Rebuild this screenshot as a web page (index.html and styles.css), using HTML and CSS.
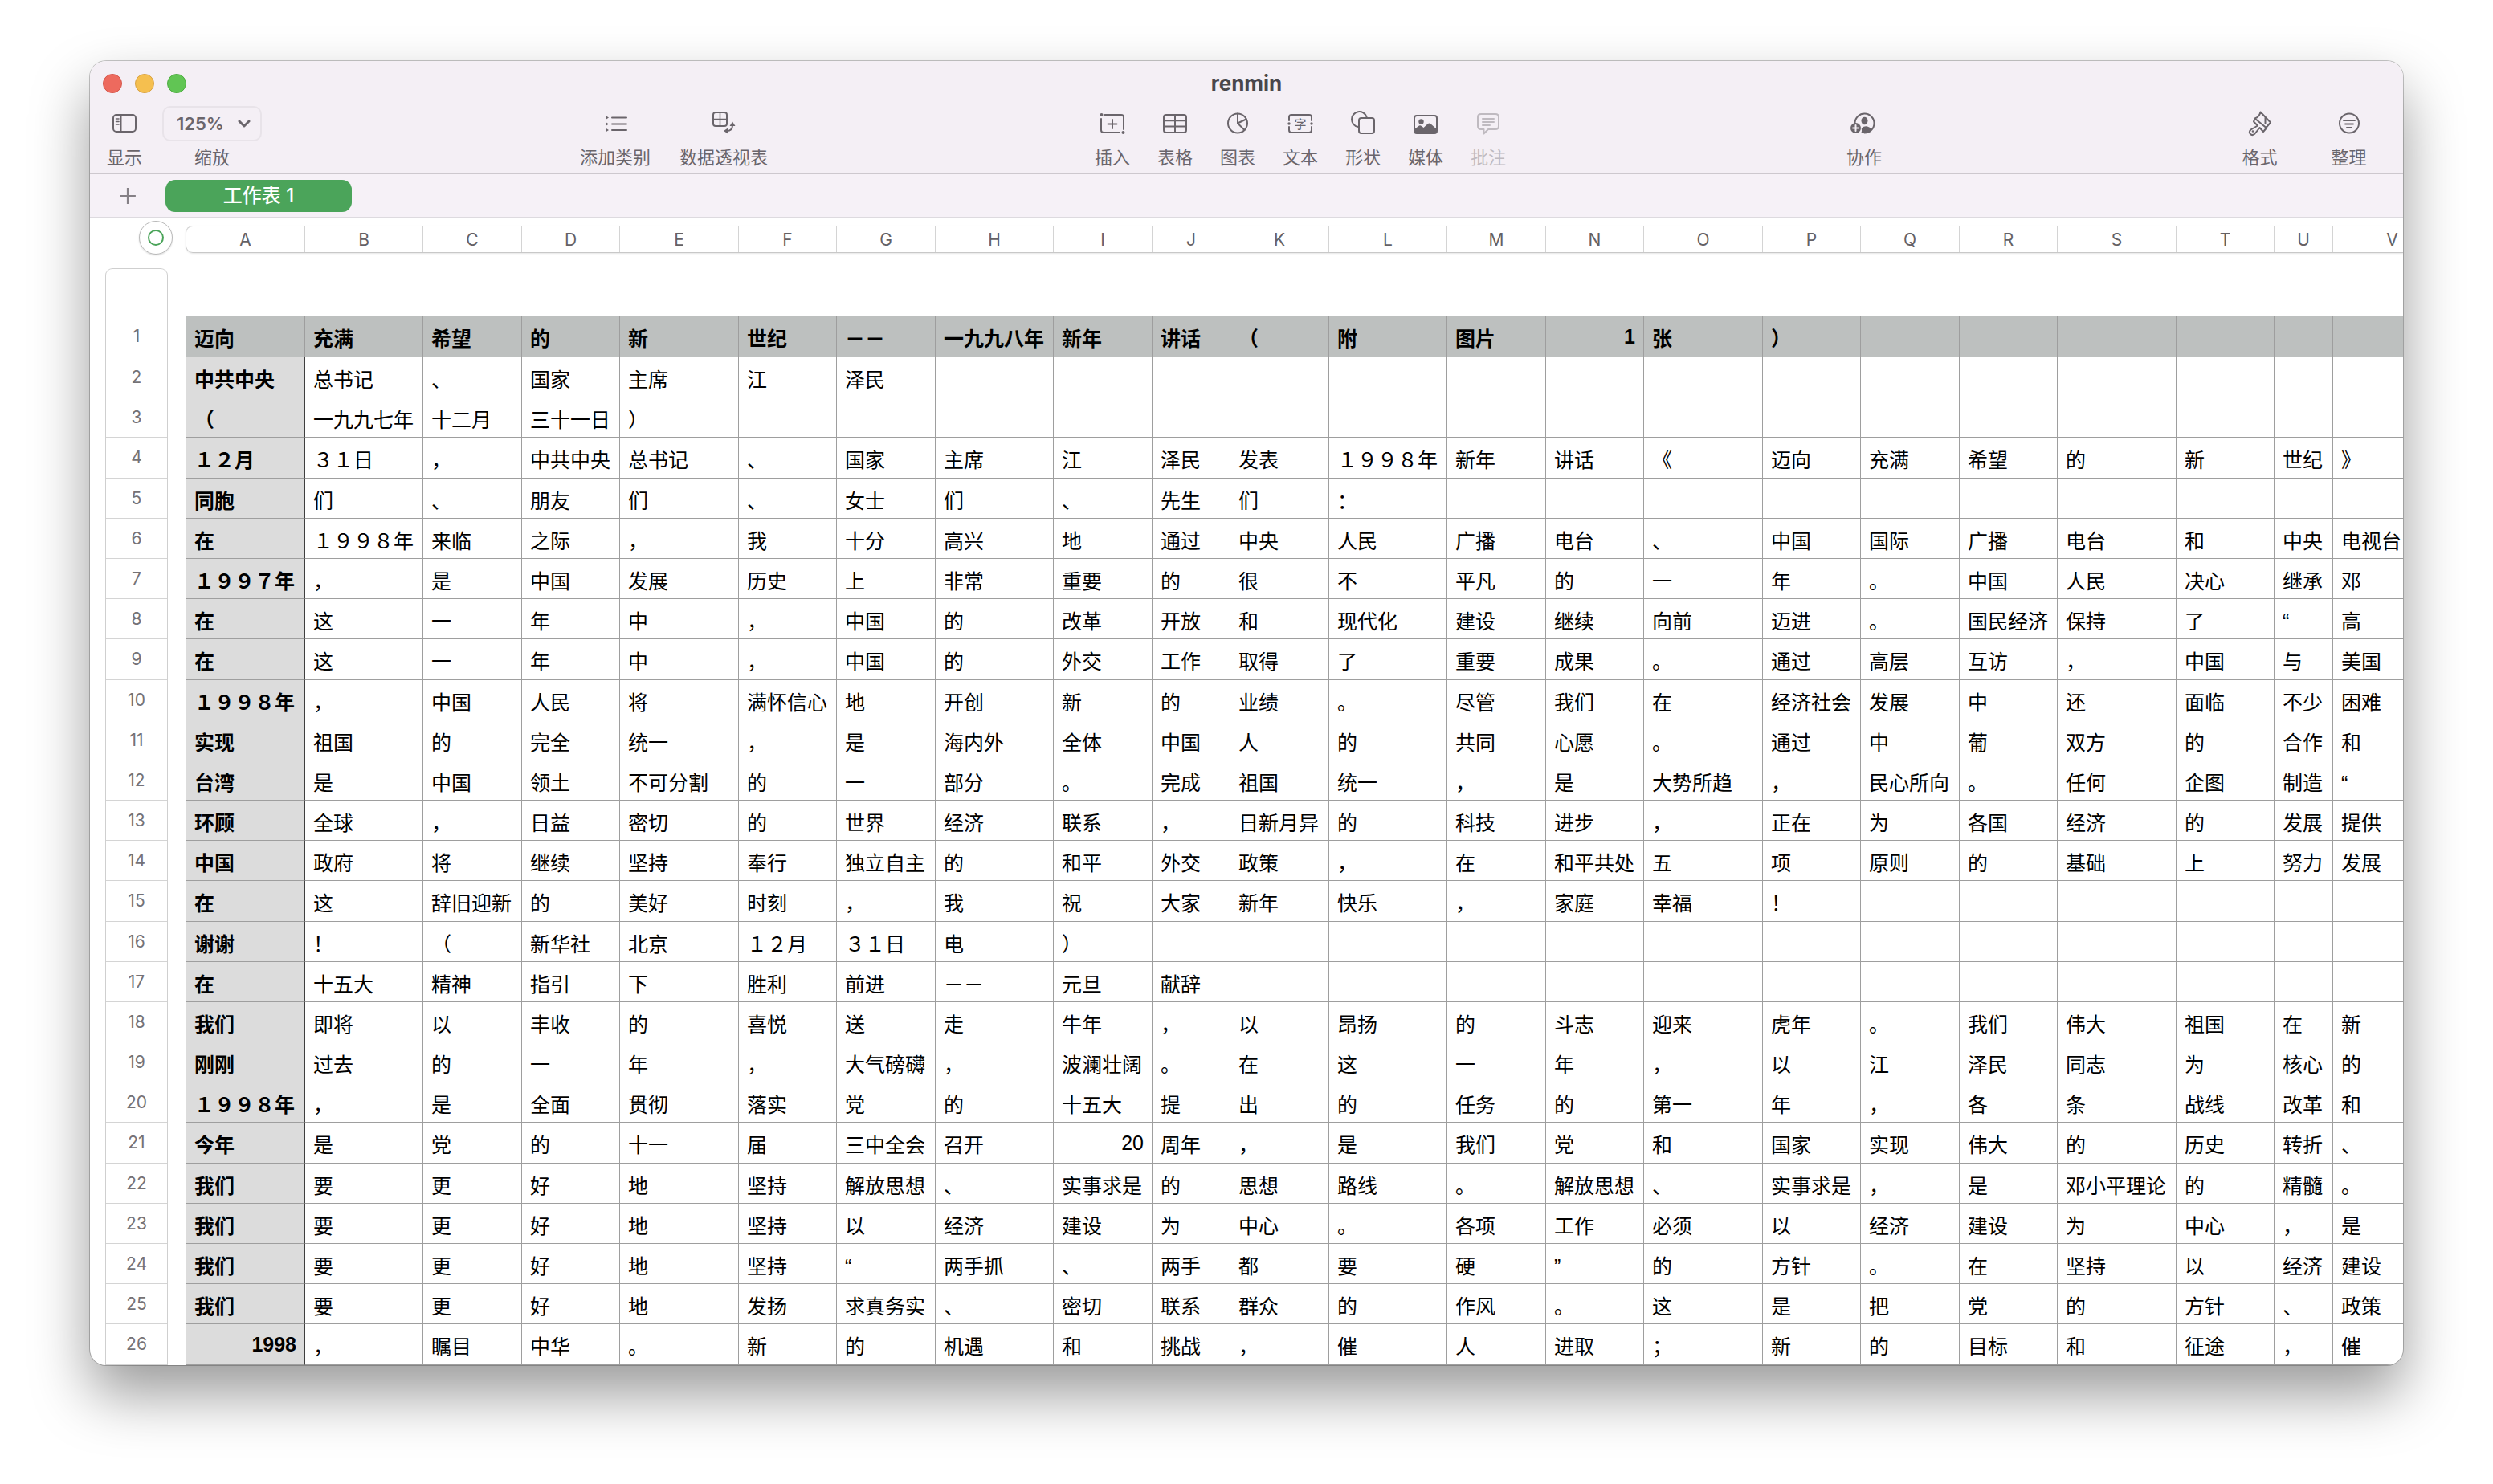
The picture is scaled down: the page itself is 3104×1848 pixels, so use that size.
FILE: index.html
```html
<!DOCTYPE html>
<html lang="zh-CN">
<head>
<meta charset="utf-8">
<title>renmin</title>
<meta name="viewport" content="width=device-width, initial-scale=1">
<link rel="stylesheet" href="styles.css">
</head>
<body>
<main class="window">
  <header class="toolbar">
    <div class="titlebar">
      <div class="lights">
        <button class="light light-close" aria-label="关闭"></button>
        <button class="light light-min" aria-label="最小化"></button>
        <button class="light light-full" aria-label="全屏"></button>
      </div>
      <h1 class="title">renmin</h1>
    </div>
    <div class="tools">
      <div class="group group-view">
        <button class="tool tool-show">
          <svg class="icon" viewBox="0 0 36 36"><rect x="4" y="7" width="28" height="21" rx="4"/><path d="M13.500 7v21"/><path class="thin" d="M7.500 12h3.500M7.500 15.500h3.500M7.500 19h3.500"/></svg>
          <span>显示</span>
        </button>
        <div class="tool tool-zoom">
          <div class="zoom">
            <select class="zoom-select" id="zoom"><option>125%</option></select>
            <svg class="zoom-arrow" viewBox="0 0 16 10"><path d="M2 2l6 6l6-6"/></svg>
          </div>
          <label for="zoom">缩放</label>
        </div>
      </div>
      <div class="group group-data">
        <button class="tool">
          <svg class="icon" viewBox="0 0 36 36"><path d="M14 10.500h18M14 18.500h18M14 26h18"/><path class="fill" d="M6 8l4 2.500l-4 2.500zM6 16l4 2.500l-4 2.500zM6 23.500l4 2.500l-4 2.500z"/></svg>
          <span>添加类别</span>
        </button>
        <button class="tool">
          <svg class="icon" viewBox="0 0 36 36"><rect x="5" y="4" width="17" height="17" rx="3"/><path class="thin" d="M13.500 4v17M5 12.500h17"/><path d="M22 27q7 0 7-7"/><path class="fill" d="M24 23v8l-6-4zM25.500 21h7l-3.500-5.500z"/></svg>
          <span>数据透视表</span>
        </button>
      </div>
      <div class="group group-insert">
        <button class="tool">
          <svg class="icon" viewBox="0 0 36 36"><path d="M8.500 7H29q3 0 3 3v15M4 12v14q0 3 3 3h20M18 13v11M12.500 18.500h11"/><circle class="fill" cx="4.500" cy="7" r="2"/><circle class="fill" cx="31.500" cy="29" r="2"/></svg>
          <span>插入</span>
        </button>
        <button class="tool">
          <svg class="icon" viewBox="0 0 36 36"><rect x="4" y="7" width="28" height="22" rx="3"/><path d="M18 7v22M4 14.300h28M4 21.600h28"/></svg>
          <span>表格</span>
        </button>
        <button class="tool">
          <svg class="icon" viewBox="0 0 36 36"><circle cx="18" cy="17.500" r="12"/><path d="M18 5.500v12l8.500 8.500M18 17.500l10.500-5"/></svg>
          <span>图表</span>
        </button>
        <button class="tool">
          <svg class="icon" viewBox="0 0 36 36"><path d="M4 14v-4q0-3 3-3h22q3 0 3 3v4M4 22v4q0 3 3 3h22q3 0 3-3v-4"/><circle class="fill" cx="4" cy="18" r="1.700"/><circle class="fill" cx="32" cy="18" r="1.700"/><text class="icon-char" x="18" y="24">字</text></svg>
          <span>文本</span>
        </button>
        <button class="tool">
          <svg class="icon" viewBox="0 0 36 36"><path d="M12 22a9.500 9.500 0 1 1 10.500-12.500"/><rect x="13" y="11" width="19" height="19" rx="3"/></svg>
          <span>形状</span>
        </button>
        <button class="tool">
          <svg class="icon" viewBox="0 0 36 36"><rect x="4" y="8" width="28" height="22" rx="3"/><circle class="fill" cx="12.500" cy="15.500" r="3.200"/><path class="fill" d="M4 25l6-4.500q1-.6 2 0l3.500 2.500l5.500-5q1.500-1 3 0l8 7v3q0 2-2 2H6q-2 0-2-2z"/></svg>
          <span>媒体</span>
        </button>
        <button class="tool" disabled>
          <svg class="icon" viewBox="0 0 36 36"><path d="M9 6h18q4 0 4 4v11q0 4-4 4H18l-5.500 5.500V25H9q-4 0-4-4V10q0-4 4-4z"/><path d="M11 12h14M11 16h14M11 20h9"/></svg>
          <span>批注</span>
        </button>
      </div>
      <div class="group group-share">
        <button class="tool">
          <svg class="icon" viewBox="0 0 36 36"><path d="M6.500 17a12 12 0 1 1 12 12.500"/><ellipse class="fill" cx="18.500" cy="14.500" rx="4" ry="4.800"/><path class="fill" d="M14.500 29q1-2 .2-5.500q4-3 8-1.800q3 .8 4.600 3.200q-3.800 5.600-12.800 4.100z"/><circle class="fill" cx="7.500" cy="23.500" r="6.500"/><path class="knock" d="M7.500 20v7M4 23.500h7"/></svg>
          <span>协作</span>
        </button>
      </div>
      <div class="group group-inspect">
        <button class="tool">
          <svg class="icon" viewBox="0 0 36 36"><path d="M18.500 3.500l12.500 13l-5.500 6.500L11.500 11.500q5.500-1.500 7-8zM11.500 12l-1.500 3.500l5 5l-8.500 5q-3 3-.5 5.500q2.500 2.500 5.500-.5l6-7.500l4.500 5l3.500-4M24.500 10.500v7"/><circle class="fill" cx="9" cy="27.500" r="1.300"/></svg>
          <span>格式</span>
        </button>
        <button class="tool">
          <svg class="icon" viewBox="0 0 36 36"><circle cx="18" cy="17.500" r="12"/><path d="M11 14h14M13 18.500h10M15 23h6"/></svg>
          <span>整理</span>
        </button>
      </div>
    </div>
  </header>
  <nav class="sheets">
    <button class="add-sheet" aria-label="添加工作表"><svg viewBox="0 0 20 20"><path d="M10 1v18M1 10h18"/></svg></button>
    <button class="sheet-tab">工作表 1</button>
  </nav>
  <section class="canvas">
    <div class="corner"><button class="table-handle" aria-label="选择表格"><span></span></button></div>
    <div class="col-heads">
      <span>A</span><span>B</span><span>C</span><span>D</span><span>E</span><span>F</span><span>G</span><span>H</span><span>I</span><span>J</span><span>K</span><span>L</span><span>M</span><span>N</span><span>O</span><span>P</span><span>Q</span><span>R</span><span>S</span><span>T</span><span>U</span><span>V</span>
    </div>
    <div class="row-heads">
      <span class="name-row"></span>
      <span class="tall">1</span><span>2</span><span>3</span><span class="tall">4</span><span>5</span><span>6</span><span>7</span><span>8</span><span class="tall">9</span><span>10</span><span>11</span><span>12</span><span>13</span><span>14</span><span class="tall">15</span><span>16</span><span>17</span><span>18</span><span>19</span><span>20</span><span class="tall">21</span><span>22</span><span>23</span><span>24</span><span>25</span><span class="tall">26</span>
    </div>
    <table class="grid">
      <colgroup><col class="w148"><col class="w147"><col class="w123"><col class="w122"><col class="w148"><col class="w122"><col class="w123"><col class="w147"><col class="w123"><col class="w97"><col class="w123"><col class="w147"><col class="w123"><col class="w122"><col class="w148"><col class="w122"><col class="w123"><col class="w122"><col class="w148"><col class="w122"><col class="w73"><col class="w148"></colgroup>
      <thead>
        <tr class="tall"><th>迈向<th>充满<th>希望<th>的<th>新<th>世纪<th>－－<th>一九九八年<th>新年<th>讲话<th>（<th>附<th>图片<th class="num">1<th>张<th>）<th><th><th><th><th><th>
      </thead>
      <tbody>
        <tr><th>中共中央<td>总书记<td>、<td>国家<td>主席<td>江<td>泽民<td><td><td><td><td><td><td><td><td><td><td><td><td><td><td><td>
        <tr><th>（<td>一九九七年<td>十二月<td>三十一日<td>）<td><td><td><td><td><td><td><td><td><td><td><td><td><td><td><td><td><td>
        <tr class="tall"><th>１２月<td>３１日<td>，<td>中共中央<td>总书记<td>、<td>国家<td>主席<td>江<td>泽民<td>发表<td>１９９８年<td>新年<td>讲话<td>《<td>迈向<td>充满<td>希望<td>的<td>新<td>世纪<td>》
        <tr><th>同胞<td>们<td>、<td>朋友<td>们<td>、<td>女士<td>们<td>、<td>先生<td>们<td>：<td><td><td><td><td><td><td><td><td><td>
        <tr><th>在<td>１９９８年<td>来临<td>之际<td>，<td>我<td>十分<td>高兴<td>地<td>通过<td>中央<td>人民<td>广播<td>电台<td>、<td>中国<td>国际<td>广播<td>电台<td>和<td>中央<td>电视台
        <tr><th>１９９７年<td>，<td>是<td>中国<td>发展<td>历史<td>上<td>非常<td>重要<td>的<td>很<td>不<td>平凡<td>的<td>一<td>年<td>。<td>中国<td>人民<td>决心<td>继承<td>邓
        <tr><th>在<td>这<td>一<td>年<td>中<td>，<td>中国<td>的<td>改革<td>开放<td>和<td>现代化<td>建设<td>继续<td>向前<td>迈进<td>。<td>国民经济<td>保持<td>了<td>“<td>高
        <tr class="tall"><th>在<td>这<td>一<td>年<td>中<td>，<td>中国<td>的<td>外交<td>工作<td>取得<td>了<td>重要<td>成果<td>。<td>通过<td>高层<td>互访<td>，<td>中国<td>与<td>美国
        <tr><th>１９９８年<td>，<td>中国<td>人民<td>将<td>满怀信心<td>地<td>开创<td>新<td>的<td>业绩<td>。<td>尽管<td>我们<td>在<td>经济社会<td>发展<td>中<td>还<td>面临<td>不少<td>困难
        <tr><th>实现<td>祖国<td>的<td>完全<td>统一<td>，<td>是<td>海内外<td>全体<td>中国<td>人<td>的<td>共同<td>心愿<td>。<td>通过<td>中<td>葡<td>双方<td>的<td>合作<td>和
        <tr><th>台湾<td>是<td>中国<td>领土<td>不可分割<td>的<td>一<td>部分<td>。<td>完成<td>祖国<td>统一<td>，<td>是<td>大势所趋<td>，<td>民心所向<td>。<td>任何<td>企图<td>制造<td>“
        <tr><th>环顾<td>全球<td>，<td>日益<td>密切<td>的<td>世界<td>经济<td>联系<td>，<td>日新月异<td>的<td>科技<td>进步<td>，<td>正在<td>为<td>各国<td>经济<td>的<td>发展<td>提供
        <tr><th>中国<td>政府<td>将<td>继续<td>坚持<td>奉行<td>独立自主<td>的<td>和平<td>外交<td>政策<td>，<td>在<td>和平共处<td>五<td>项<td>原则<td>的<td>基础<td>上<td>努力<td>发展
        <tr class="tall"><th>在<td>这<td>辞旧迎新<td>的<td>美好<td>时刻<td>，<td>我<td>祝<td>大家<td>新年<td>快乐<td>，<td>家庭<td>幸福<td>！<td><td><td><td><td><td>
        <tr><th>谢谢<td>！<td>（<td>新华社<td>北京<td>１２月<td>３１日<td>电<td>）<td><td><td><td><td><td><td><td><td><td><td><td><td><td>
        <tr><th>在<td>十五大<td>精神<td>指引<td>下<td>胜利<td>前进<td>－－<td>元旦<td>献辞<td><td><td><td><td><td><td><td><td><td><td><td><td>
        <tr><th>我们<td>即将<td>以<td>丰收<td>的<td>喜悦<td>送<td>走<td>牛年<td>，<td>以<td>昂扬<td>的<td>斗志<td>迎来<td>虎年<td>。<td>我们<td>伟大<td>祖国<td>在<td>新
        <tr><th>刚刚<td>过去<td>的<td>一<td>年<td>，<td>大气磅礴<td>，<td>波澜壮阔<td>。<td>在<td>这<td>一<td>年<td>，<td>以<td>江<td>泽民<td>同志<td>为<td>核心<td>的
        <tr><th>１９９８年<td>，<td>是<td>全面<td>贯彻<td>落实<td>党<td>的<td>十五大<td>提<td>出<td>的<td>任务<td>的<td>第一<td>年<td>，<td>各<td>条<td>战线<td>改革<td>和
        <tr class="tall"><th>今年<td>是<td>党<td>的<td>十一<td>届<td>三中全会<td>召开<td class="num">20<td>周年<td>，<td>是<td>我们<td>党<td>和<td>国家<td>实现<td>伟大<td>的<td>历史<td>转折<td>、
        <tr><th>我们<td>要<td>更<td>好<td>地<td>坚持<td>解放思想<td>、<td>实事求是<td>的<td>思想<td>路线<td>。<td>解放思想<td>、<td>实事求是<td>，<td>是<td>邓小平理论<td>的<td>精髓<td>。
        <tr><th>我们<td>要<td>更<td>好<td>地<td>坚持<td>以<td>经济<td>建设<td>为<td>中心<td>。<td>各项<td>工作<td>必须<td>以<td>经济<td>建设<td>为<td>中心<td>，<td>是
        <tr><th>我们<td>要<td>更<td>好<td>地<td>坚持<td>“<td>两手抓<td>、<td>两手<td>都<td>要<td>硬<td>”<td>的<td>方针<td>。<td>在<td>坚持<td>以<td>经济<td>建设
        <tr><th>我们<td>要<td>更<td>好<td>地<td>发扬<td>求真务实<td>、<td>密切<td>联系<td>群众<td>的<td>作风<td>。<td>这<td>是<td>把<td>党<td>的<td>方针<td>、<td>政策
        <tr class="tall"><th class="num">1998<td>，<td>瞩目<td>中华<td>。<td>新<td>的<td>机遇<td>和<td>挑战<td>，<td>催<td>人<td>进取<td>；<td>新<td>的<td>目标<td>和<td>征途<td>，<td>催
      </tbody>
    </table>
  </section>
</main>
</body>
</html>
```
FILE: styles.css
```css
* { box-sizing: border-box; }

body {
  margin: 0;
  min-height: 100vh;
  padding: 76px 112px 148px;
  background: #fff;
  color: #000;
  font-family: "Inter", "Noto Sans CJK SC", sans-serif;
  overflow-x: hidden;
}

button, select {
  margin: 0;
  padding: 0;
  border: 0;
  background: none;
  color: inherit;
  font: inherit;
}

.window {
  overflow: hidden;
  border-radius: 20px;
  background: #fff;
  box-shadow: 0 0 0 1px rgba(0, 0, 0, .22), 0 36px 72px rgba(0, 0, 0, .4);
}

/* title bar and tools */
.toolbar {
  background: #f4eff5;
  border-bottom: 1px solid #cdc8ce;
  color: #6a656b;
}
.titlebar {
  display: grid;
  grid-template-columns: 1fr auto 1fr;
  align-items: center;
  height: 56px;
  padding: 0 16px;
}
.lights { display: flex; gap: 16px; }
.light { width: 24px; height: 24px; border-radius: 50%; border: 1px solid; }
.light-close { background: #ed6a5e; border-color: #d5564b; }
.light-min { background: #f5bf4f; border-color: #d8a243; }
.light-full { background: #61c554; border-color: #4dab40; }
.title {
  margin: 0;
  font-size: 26px;
  line-height: 32px;
  font-weight: 700;
  color: #4a474b;
}

.tools {
  display: flex;
  justify-content: space-between;
  height: 84px;
  padding: 0 12px;
}
.group { display: flex; }
.group-view { gap: 16px; }
.group-data { gap: 32px; padding-left: 2px; }
.group-insert .tool, .group-share .tool { width: 78px; }
.group-inspect { padding-left: 8px; }
.group-inspect .tool { width: 111px; }
.tool {
  display: flex;
  flex-direction: column;
  align-items: center;
  font-size: 22px;
  line-height: 32px;
  white-space: nowrap;
}
.group-data .tool:first-child { width: 96px; }
.group-data .tool:last-child { width: 110px; }
.tool-show { width: 62px; }
.tool-zoom { width: 124px; }
.tool:disabled { color: #bfbac0; }
.tool span, .tool label { margin-top: 4px; }
.tool .icon { width: 36px; height: 36px; margin: 4px 0; overflow: visible; }
.icon { fill: none; stroke: currentColor; stroke-width: 2; stroke-linecap: round; stroke-linejoin: round; }
.icon .thin { stroke-width: 1.5; }
.icon .fill { fill: currentColor; stroke: none; }
.icon .knock { stroke: #f4eff5; }
.icon-char {
  fill: currentColor;
  stroke: none;
  font-family: "Noto Sans CJK SC", sans-serif;
  font-size: 15px;
  font-weight: 500;
  text-anchor: middle;
}
.zoom { display: grid; align-items: center; width: 124px; height: 44px; }
.zoom-select {
  grid-area: 1 / 1;
  width: 100%;
  height: 44px;
  padding-left: 16px;
  border: 2px solid #e8e3e9;
  border-radius: 10px;
  appearance: none;
  font-size: 22px;
  font-weight: 600;
}
.zoom-arrow {
  grid-area: 1 / 1;
  justify-self: end;
  width: 16px;
  height: 10px;
  margin-right: 14px;
  fill: none;
  stroke: currentColor;
  stroke-width: 3;
  stroke-linecap: round;
  stroke-linejoin: round;
  pointer-events: none;
}

/* sheet tabs */
.sheets {
  display: flex;
  align-items: center;
  height: 55px;
  padding: 0 36px;
  gap: 36px;
  background: #f6f1f7;
  border-bottom: 2px solid #dddadf;
}
.add-sheet { width: 22px; height: 22px; color: #858086; }
.add-sheet svg { display: block; width: 22px; height: 22px; fill: none; stroke: currentColor; stroke-width: 2; }
.sheet-tab {
  width: 232px;
  height: 40px;
  border-radius: 12px;
  background: #4ba45a;
  color: #fff;
  font-size: 24px;
  line-height: 40px;
  font-weight: 500;
}

/* canvas: headings round the table */
.canvas {
  display: grid;
  grid-template-columns: 97px minmax(0, 1fr);
  grid-template-rows: 53px auto;
  column-gap: 22px;
}
.corner { display: flex; justify-content: flex-end; padding: 3px 0 0; margin-right: -6px; }
.table-handle {
  display: grid;
  place-items: center;
  width: 42px;
  height: 42px;
  border: 1px solid #b8b8b8;
  border-radius: 50%;
  box-shadow: 0 1px 2px rgba(0, 0, 0, .15);
}
.table-handle span { width: 20px; height: 20px; border: 2px solid #4ba45a; border-radius: 50%; }
.col-heads, .row-heads { font-size: 21px; color: #646165; }
.col-heads {
  display: grid;
  grid-template-columns: 148px 147px 123px 122px 148px 122px 123px 147px 123px 97px 123px 147px 123px 122px 148px 122px 123px 122px 148px 122px 73px 148px;
  height: 34px;
  margin-top: 9px;
  border: 1px solid #c8c8c8;
  border-right: 0;
  border-radius: 9px 0 0 9px;
  box-shadow: 0 1px 2px rgba(0, 0, 0, .1);
  overflow: hidden;
}
.col-heads span {
  border-right: 1px solid #d4d4d4;
  line-height: 34px;
  text-align: center;
}
.row-heads {
  width: 78px;
  margin-top: 9px;
  justify-self: end;
  border: 1px solid #cfcfcf;
  border-bottom: 0;
  border-radius: 9px 9px 0 0;
  color: #757276;
}
.row-heads span {
  display: block;
  height: 50px;
  border-bottom: 1px solid #d4d4d4;
  line-height: 50px;
  text-align: center;
}
.row-heads .tall { height: 51px; }
.row-heads .name-row { height: 59px; }

.grid {
  table-layout: fixed;
  width: 2822px;
  margin-top: 68px;
  border-collapse: separate;
  border-spacing: 0;
  border-left: 1px solid #9e9e9e;
  border-top: 1px solid #9e9e9e;
  font-family: "Liberation Sans", "Noto Sans CJK SC", sans-serif;
  font-size: 25px;
  line-height: 36px;
}
.w148 { width: 148px; }
.w147 { width: 147px; }
.w123 { width: 123px; }
.w122 { width: 122px; }
.w97 { width: 97px; }
.w73 { width: 73px; }
.grid tr { height: 50px; }
.grid .tall { height: 51px; }
.grid th, .grid td {
  padding: 6px 0 0 10px;
  border-right: 1px solid #9e9e9e;
  border-bottom: 1px solid #9e9e9e;
  text-align: left;
  vertical-align: middle;
  white-space: nowrap;
}
.grid .num { padding: 0 10px 0 0; text-align: right; }
.grid th { font-weight: 700; }
.grid tbody th { background: #dcdcdc; border-right-color: #3f3f3f; }
.grid thead th { background: #bdc0bf; border-bottom-color: #3f3f3f; }
```
